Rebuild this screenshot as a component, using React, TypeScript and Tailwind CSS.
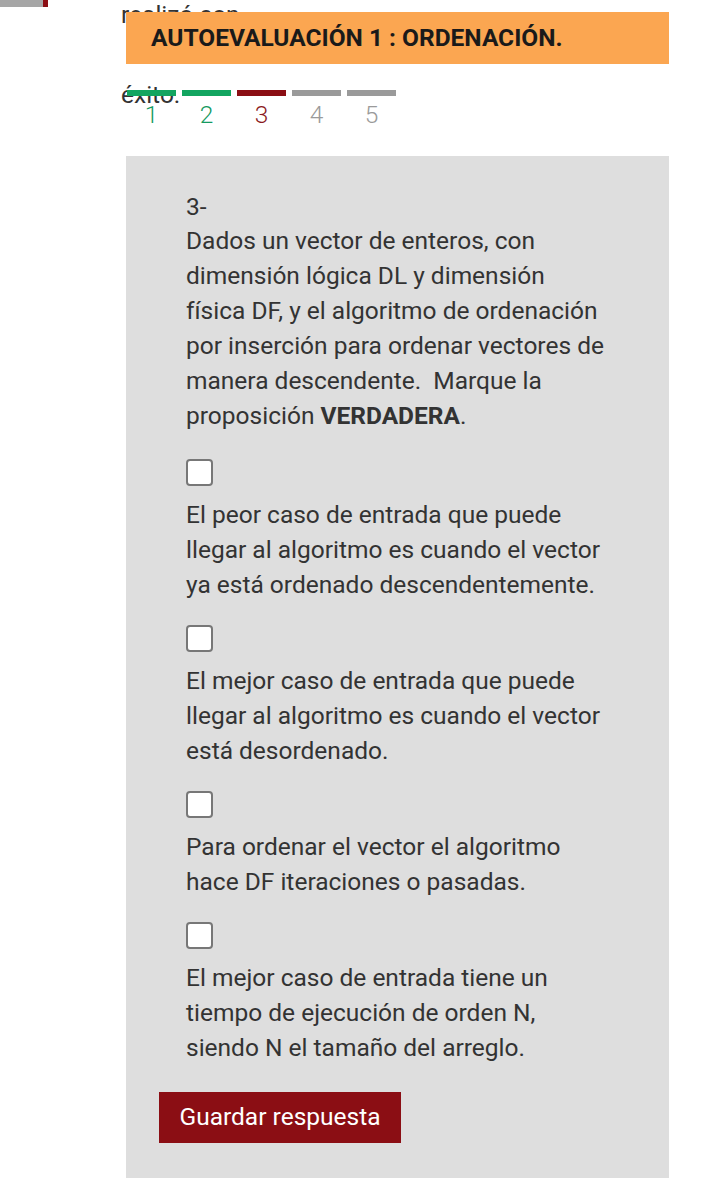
const steps = [
  { n: 1, bar: 'bg-[#12a560]', text: 'text-[#159a5f]' },
  { n: 2, bar: 'bg-[#12a560]', text: 'text-[#159a5f]' },
  { n: 3, bar: 'bg-[#8b0e14]', text: 'text-[#8b1a22]' },
  { n: 4, bar: 'bg-[#9a9a9a]', text: 'text-[#9a9a9a]' },
  { n: 5, bar: 'bg-[#9a9a9a]', text: 'text-[#9a9a9a]' },
];

const options = [
  'El peor caso de entrada que puede llegar al algoritmo es cuando el vector ya está ordenado descendentemente.',
  'El mejor caso de entrada que puede llegar al algoritmo es cuando el vector está desordenado.',
  'Para ordenar el vector el algoritmo hace DF iteraciones o pasadas.',
  'El mejor caso de entrada tiene un tiempo de ejecución de orden N, siendo N el tamaño del arreglo.',
];

export default function App() {
  return (
    <div className="relative min-h-screen overflow-hidden bg-white text-[#333] font-['Roboto','Liberation_Sans',sans-serif]">
      {/* leftover menu strip */}
      <div className="flex h-[7px]">
        <div className="w-[43px] bg-[#a6a6a6]" />
        <div className="w-[5px] bg-[#8b0e14]" />
      </div>

      {/* text under the header, partly covered */}
      <p className="absolute left-[121px] top-[-25px] z-0 w-[140px] text-[24.5px] leading-[80px]">
        realizó con éxito.
      </p>

      <div className="relative z-10 ml-[126px] mt-[5px] w-[543px]">
        <div className="flex h-[52px] items-center bg-[#fba651] pl-[25px]">
          <h1 className="text-[24.5px] font-bold text-[#1a1a1a]">
            AUTOEVALUACIÓN 1 : ORDENACIÓN.
          </h1>
        </div>

        <div className="ml-[1px] mt-[26px] flex gap-[6px]">
          {steps.map((s) => (
            <div key={s.n} className="flex w-[49px] flex-col items-center">
              <div className={`h-[6px] w-full ${s.bar}`} />
              <span className={`mt-[4px] text-[24.5px] font-light leading-[29px] ${s.text}`}>{s.n}</span>
            </div>
          ))}
        </div>

        <div className="mt-[27px] bg-[#dedede] pb-[35px] pl-[60px] pr-[63px] pt-[35px] text-[24.5px]">
          <p className="leading-[32px]">3-</p>
          <p className="leading-[35px]">
            Dados un vector de enteros, con dimensión lógica DL y dimensión física DF, y el algoritmo de
            ordenación por inserción para ordenar vectores de manera descendente.&nbsp; Marque la proposición{' '}
            <strong className="font-bold">VERDADERA</strong>.
          </p>

          {options.map((o, i) => (
            <label key={i} className={`block ${i === 0 ? 'mt-[26px]' : 'mt-[23px]'}`}>
              <span className="block h-[27px] w-[27px] rounded-[4px] border-2 border-[#777] bg-white" />
              <span className="mt-[11px] block leading-[35px]">{o}</span>
            </label>
          ))}

          <button className="-ml-[27px] mt-[27px] h-[51px] w-[242px] bg-[#8b0e14] text-[24.5px] text-white">
            Guardar respuesta
          </button>
        </div>
      </div>
    </div>
  );
}
